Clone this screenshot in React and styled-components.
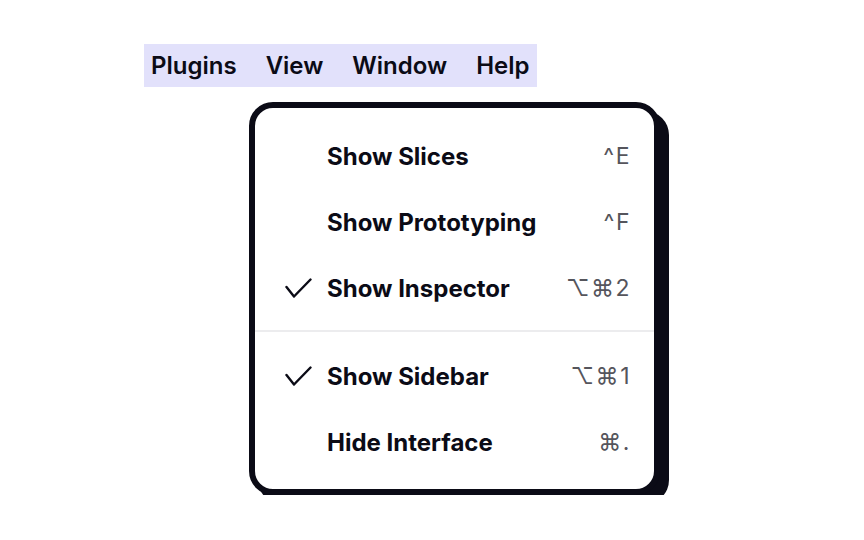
import styled, { createGlobalStyle } from "styled-components";

const GlobalStyle = createGlobalStyle`
  body {
    margin: 0;
    background: #ffffff;
    font-family: Inter, "Noto Sans", "DejaVu Sans", sans-serif;
    color: #0b0b16;
  }
`;

const items = [
  { label: "Show Slices", shortcut: "^E" },
  { label: "Show Prototyping", shortcut: "^F" },
  { label: "Show Inspector", shortcut: "⌥⌘2", checked: true },
  { divider: true },
  { label: "Show Sidebar", shortcut: "⌥⌘1", checked: true },
  { label: "Hide Interface", shortcut: "⌘." },
];

function CheckMark() {
  return (
    <svg width="27" height="21" viewBox="0 0 27 21" fill="none">
      <polyline
        points="1.5,9 9,18.5 25.5,1.5"
        stroke="#0b0b16"
        strokeWidth="2.4"
        strokeLinecap="round"
        strokeLinejoin="round"
      />
    </svg>
  );
}

export default function App() {
  return (
    <>
      <GlobalStyle />
      <Page>
        <MenuBar>
          <BarItem>Plugins</BarItem>
          <BarItem>View</BarItem>
          <BarItem>Window</BarItem>
          <BarItem>Help</BarItem>
        </MenuBar>
        <Menu>
          {items.map((item, i) =>
            item.divider ? (
              <Divider key={i} />
            ) : (
              <Row key={i}>
                <CheckSlot>{item.checked && <CheckMark />}</CheckSlot>
                <Label>{item.label}</Label>
                <Shortcut>{item.shortcut}</Shortcut>
              </Row>
            )
          )}
        </Menu>
      </Page>
    </>
  );
}

const Page = styled.div`
  padding: 44px 0 0 144px;
  display: flex;
  flex-direction: column;
  align-items: flex-start;
`;

const MenuBar = styled.div`
  display: flex;
  align-items: center;
  gap: 29px;
  height: 43px;
  padding: 0 7px;
  background: #e2e1fb;
`;

const BarItem = styled.span`
  font-size: 24px;
  font-weight: 600;
  color: #0b0b16;
`;

const Menu = styled.div`
  margin: 15px 0 0 105px;
  width: 399px;
  padding: 15px 0 14px;
  background: #ffffff;
  border: 6px solid #0b0b16;
  border-radius: 24px;
  box-shadow: 9px 9px 0 #0b0b16;
`;

const Row = styled.div`
  display: flex;
  align-items: center;
  height: 66px;
  padding: 0 23px 0 30px;
`;

const CheckSlot = styled.div`
  width: 42px;
  display: flex;
  align-items: center;
`;

const Label = styled.span`
  flex: 1;
  font-size: 24px;
  font-weight: 700;
  color: #0b0b16;
`;

const Shortcut = styled.span`
  font-size: 23px;
  font-weight: 400;
  color: #55555c;
  letter-spacing: 1.5px;
`;

const Divider = styled.div`
  height: 2px;
  background: #ececee;
  margin: 9px 0 11px;
`;
